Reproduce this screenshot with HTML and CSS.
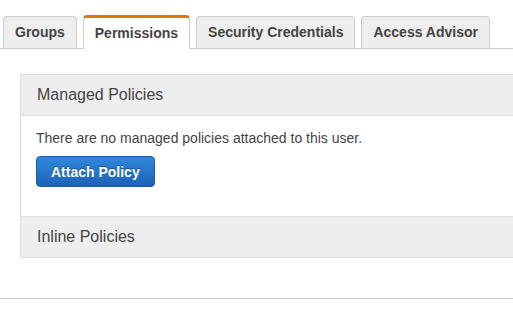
FILE: index.html
```html
<!DOCTYPE html>
<html>
<head>
    <title>User - Permissions</title>
    <link rel="stylesheet" href="styles.css">
</head>
<body>
    <ul class="tabs">
        <li class="tab">Groups</li>
        <li class="tab active">Permissions</li>
        <li class="tab">Security Credentials</li>
        <li class="tab">Access Advisor</li>
    </ul>
    <div class="content">
        <div class="panel">
            <div class="panel-heading">Managed Policies</div>
            <div class="panel-body">
                <p>There are no managed policies attached to this user.</p>
                <button class="btn-primary">Attach Policy</button>
            </div>
            <div class="panel-heading">Inline Policies</div>
        </div>
    </div>
    <div class="divider"></div>
</body>
</html>
```

FILE: styles.css
```css
body {
    margin: 0;
    font-family: "Liberation Sans", Arial, sans-serif;
    color: #444;
    background-color: #fff;
    overflow: hidden;
}

.tabs {
    display: flex;
    align-items: flex-end;
    gap: 6px;
    list-style: none;
    margin: 0;
    padding: 15px 0 0 3px;
    border-bottom: 1px solid #ccc;
}

.tab {
    height: 31px;
    line-height: 31px;
    padding: 0 11px;
    background-color: #eee;
    border: 1px solid #ccc;
    border-bottom: none;
    border-radius: 4px 4px 0 0;
    font-size: 14px;
    font-weight: bold;
    color: #444;
}

.tab.active {
    height: 30px;
    line-height: 30px;
    background-color: #fff;
    border-top: 3px solid #e07b00;
    margin-bottom: -1px;
    padding-bottom: 1px;
}

.content {
    padding: 25px 0 40px 20px;
}

.panel {
    border: 1px solid #ddd;
    border-right: none;
}

.panel-heading {
    height: 40px;
    line-height: 40px;
    padding: 0 16px;
    background-color: #eee;
    font-size: 16px;
}

.panel-heading:first-child {
    border-bottom: 1px solid #ddd;
}

.panel-body {
    padding: 14px 15px 29px;
    border-bottom: 1px solid #ddd;
}

.panel-body p {
    margin: 0 0 9px;
    font-size: 14px;
    line-height: 17px;
}

.btn-primary {
    height: 31px;
    padding: 0 14px;
    border: 1px solid #1a5aa6;
    border-radius: 4px;
    background: linear-gradient(#3189dc, #1c62b5);
    color: #fff;
    font-family: "Liberation Sans", Arial, sans-serif;
    font-size: 14px;
    font-weight: bold;
    text-shadow: 0 -1px 1px rgba(0, 0, 0, 0.35);
    cursor: pointer;
}

.divider {
    border-top: 1px solid #ccc;
}
```
